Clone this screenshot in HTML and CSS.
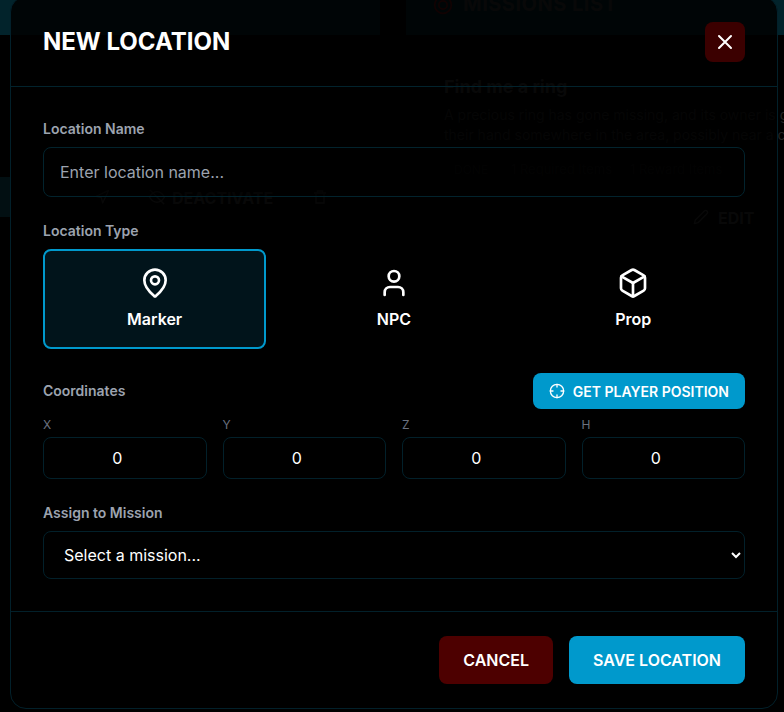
FILE: index.html
```html
<!DOCTYPE html>
<html lang="en">
<head>
<meta charset="utf-8">
<title>New Location</title>
<link rel="stylesheet" href="styles.css">
</head>
<body>
<div class="ghost" aria-hidden="true">
  <div class="ghost-bar"></div>
  <div class="ghost-gap"></div>
  <div class="ghost-strip"></div>
  <svg class="ghost-icon gi-target" width="20" height="20" viewBox="0 0 24 24" fill="none" stroke="#701010" stroke-width="2"><circle cx="12" cy="12" r="10"/><circle cx="12" cy="12" r="5"/></svg>
  <div class="ghost-title">MISSIONS LIST</div>
  <div class="ghost-name">Find me a ring</div>
  <div class="ghost-desc">A precious ring has gone missing, and its owner is g<br>their hand somewhere in the area, possibly near a c</div>
  <div class="ghost-badge">DONE</div>
  <div class="ghost-req">1 Required Items</div>
  <div class="ghost-rew">1 Reward Items</div>
  <svg class="ghost-icon gi-send" width="16" height="16" viewBox="0 0 24 24" fill="none" stroke="#383838" stroke-width="2" stroke-linejoin="round"><path d="M3 11 22 2l-9 19-2-8Z"/></svg>
  <svg class="ghost-icon gi-eye" width="18" height="18" viewBox="0 0 24 24" fill="none" stroke="#383838" stroke-width="2" stroke-linecap="round"><path d="M2 12s4-7 10-7 10 7 10 7-4 7-10 7-10-7-10-7Z"/><path d="m3 3 18 18"/></svg>
  <div class="ghost-deact">DEACTIVATE</div>
  <svg class="ghost-icon gi-trash" width="16" height="16" viewBox="0 0 24 24" fill="none" stroke="#383838" stroke-width="2"><path d="M3 6h18M8 6V3h8v3M6 6v15h12V6"/></svg>
  <svg class="ghost-icon gi-pencil" width="16" height="16" viewBox="0 0 24 24" fill="none" stroke="#383838" stroke-width="2" stroke-linejoin="round"><path d="M17 3a2.800 2.800 0 0 1 4 4L7.500 20.500 2 22l1.500-5.500Z"/></svg>
  <div class="ghost-edit">EDIT</div>
</div>
<div class="modal">
  <header class="modal-header">
    <h1 class="modal-title">NEW LOCATION</h1>
    <button class="close-btn" type="button" aria-label="Close">
      <svg width="24" height="24" viewBox="0 0 24 24" fill="none" stroke="#fff" stroke-width="2" stroke-linecap="round"><path d="M18 6 6 18M6 6l12 12"/></svg>
    </button>
  </header>
  <div class="modal-body">
    <div class="field">
      <label class="label">Location Name</label>
      <input class="input" type="text" placeholder="Enter location name...">
    </div>
    <div class="field">
      <label class="label">Location Type</label>
      <div class="type-grid">
        <div class="type-card active">
          <svg width="32" height="32" viewBox="0 0 24 24" fill="none" stroke="#fff" stroke-width="2" stroke-linecap="round" stroke-linejoin="round"><path d="M20 10c0 5-5.500 10.200-7.400 11.800a1 1 0 0 1-1.200 0C9.500 20.200 4 15 4 10a8 8 0 0 1 16 0"/><circle cx="12" cy="10" r="3"/></svg>
          <span>Marker</span>
        </div>
        <div class="type-card">
          <svg width="32" height="32" viewBox="0 0 24 24" fill="none" stroke="#fff" stroke-width="2" stroke-linecap="round" stroke-linejoin="round"><path d="M19 21v-2a4 4 0 0 0-4-4H9a4 4 0 0 0-4 4v2"/><circle cx="12" cy="7" r="4"/></svg>
          <span>NPC</span>
        </div>
        <div class="type-card">
          <svg width="32" height="32" viewBox="0 0 24 24" fill="none" stroke="#fff" stroke-width="2" stroke-linecap="round" stroke-linejoin="round"><path d="M21 8a2 2 0 0 0-1-1.730l-7-4a2 2 0 0 0-2 0l-7 4A2 2 0 0 0 3 8v8a2 2 0 0 0 1 1.730l7 4a2 2 0 0 0 2 0l7-4A2 2 0 0 0 21 16Z"/><path d="m3.300 7 8.700 5 8.700-5"/><path d="M12 22V12"/></svg>
          <span>Prop</span>
        </div>
      </div>
    </div>
    <div class="field">
      <div class="coords-head">
        <label class="label flush">Coordinates</label>
        <button class="pos-btn" type="button">
          <svg width="16" height="16" viewBox="0 0 24 24" fill="none" stroke="#fff" stroke-width="2" stroke-linecap="round" stroke-linejoin="round"><circle cx="12" cy="12" r="10"/><path d="M22 12h-4M6 12H2M12 6V2M12 22v-4"/></svg>
          GET PLAYER POSITION
        </button>
      </div>
      <div class="coord-grid">
        <div class="coord"><span class="coord-label">X</span><input class="coord-input" type="number" value="0"></div>
        <div class="coord"><span class="coord-label">Y</span><input class="coord-input" type="number" value="0"></div>
        <div class="coord"><span class="coord-label">Z</span><input class="coord-input" type="number" value="0"></div>
        <div class="coord"><span class="coord-label">H</span><input class="coord-input" type="number" value="0"></div>
      </div>
    </div>
    <div class="field last">
      <label class="label">Assign to Mission</label>
      <select class="select"><option>Select a mission...</option></select>
    </div>
  </div>
  <footer class="modal-footer">
    <button class="btn cancel" type="button">CANCEL</button>
    <button class="btn save" type="button">SAVE LOCATION</button>
  </footer>
</div>
</body>
</html>
```
FILE: styles.css
```css
* { box-sizing: border-box; }
html, body { margin: 0; height: 712px; overflow: hidden; }
body {
  background: #000;
  font-family: Inter, "Liberation Sans", sans-serif;
  color: #fff;
  position: relative;
}
.ghost { position: absolute; inset: 0; overflow: hidden; }
.ghost-bar { position: absolute; left: 0; top: 0; width: 784px; height: 35px; background: #02232b; }
.ghost-gap { position: absolute; left: 380px; top: 0; width: 26px; height: 35px; background: #000; }
.ghost-strip { position: absolute; left: 0; top: 177px; width: 10px; height: 40px; background: #020f12; }
.ghost-icon { position: absolute; }
.gi-target { left: 433px; top: -5px; }
.gi-send { left: 94px; top: 189px; }
.gi-eye { left: 148px; top: 188px; }
.gi-trash { left: 312px; top: 189px; }
.gi-pencil { left: 693px; top: 209px; }
.ghost-title { position: absolute; left: 463px; top: -8px; font-size: 20px; letter-spacing: 0.5px; font-weight: 700; color: #383838; white-space: nowrap; }
.ghost-name { position: absolute; left: 444px; top: 76px; font-size: 18px; font-weight: 700; color: #383838; white-space: nowrap; }
.ghost-desc { position: absolute; left: 444px; top: 105px; font-size: 14px; line-height: 20px; color: #242424; white-space: nowrap; }
.ghost-badge { position: absolute; left: 446px; top: 162px; padding: 0 8px; font-size: 12px; color: #1e1e1e; }
.ghost-req { position: absolute; left: 511px; top: 161px; font-size: 13px; color: #1e1e1e; white-space: nowrap; }
.ghost-rew { position: absolute; left: 630px; top: 161px; font-size: 13px; color: #1e1e1e; white-space: nowrap; }
.ghost-deact { position: absolute; left: 172px; top: 188px; font-size: 16px; font-weight: 700; color: #383838; white-space: nowrap; }
.ghost-edit { position: absolute; left: 718px; top: 208px; font-size: 16px; font-weight: 700; color: #383838; white-space: nowrap; }

.modal {
  position: absolute;
  left: 10px;
  top: -4px;
  width: 768px;
  height: 713px;
  display: flex;
  flex-direction: column;
  background: rgba(0, 0, 0, 0.85);
  border: 1px solid #02202a;
  border-radius: 16px;
}
.modal-header {
  display: flex;
  justify-content: space-between;
  align-items: center;
  padding: 24px 32px;
  border-bottom: 1px solid #02232d;
  height: 90px;
}
.modal-title { margin: 0; font-size: 24px; line-height: 32px; font-weight: 700; color: #fff; }
.close-btn {
  width: 40px; height: 40px;
  display: flex; align-items: center; justify-content: center;
  background: #3b0000;
  border: 0; border-radius: 8px; padding: 0;
}
.modal-body { flex: 1; padding: 32px 32px 0; }
.field { margin-bottom: 24px; }
.field.last { margin-bottom: 0; }
.label {
  display: block;
  margin-bottom: 8px;
  font-size: 14px;
  line-height: 20px;
  font-weight: 600;
  color: #9ca3af;
}
.label.flush { margin-bottom: 0; }
.input {
  display: block;
  width: 100%;
  height: 50px;
  padding: 0 16px;
  background: rgba(0, 0, 0, 0.3);
  border: 1px solid #02232d;
  border-radius: 8px;
  font: 400 16px Inter, sans-serif;
  color: #fff;
}
.input::placeholder { color: #9ca3af; opacity: 1; }
.type-grid { display: grid; grid-template-columns: repeat(3, 1fr); gap: 16px; }
.type-card {
  height: 100px;
  display: flex; flex-direction: column; align-items: center; justify-content: center;
  gap: 8px;
  border: 2px solid transparent;
  border-radius: 8px;
  font-size: 16px; line-height: 24px; font-weight: 600; color: #fff;
}
.type-card.active { border-color: #0099cc; background: #01141b; }
.coords-head { display: flex; justify-content: space-between; align-items: center; margin-bottom: 8px; }
.pos-btn {
  display: flex; align-items: center; gap: 8px;
  height: 36px; padding: 0 16px;
  background: #0099cc;
  border: 0; border-radius: 8px;
  font: 600 14px Inter, sans-serif; color: #fff;
}
.coord-grid { display: grid; grid-template-columns: repeat(4, 1fr); gap: 16px; }
.coord-label { display: block; margin-bottom: 4px; font-size: 12px; line-height: 16px; color: #6b7280; }
.coord-input {
  display: block; width: 100%; height: 42px;
  background: #000;
  border: 1px solid #02202a;
  border-radius: 8px;
  text-align: center;
  font: 400 16px Inter, sans-serif; color: #fff;
}
.select {
  display: block; width: 100%; height: 48px;
  padding: 0 16px;
  background: #000;
  border: 1px solid #02202a;
  border-radius: 8px;
  font: 400 16px Inter, sans-serif; color: #fff;
}
.modal-footer {
  display: flex; justify-content: flex-end; gap: 16px;
  padding: 24px 32px;
  border-top: 1px solid #02202a;
}
.btn {
  height: 48px; padding: 0 24px;
  border: 0; border-radius: 8px;
  font: 600 16px Inter, sans-serif; color: #fff;
}
.btn.cancel { background: #4d0000; }
.btn.save { background: #0099cc; }
```
